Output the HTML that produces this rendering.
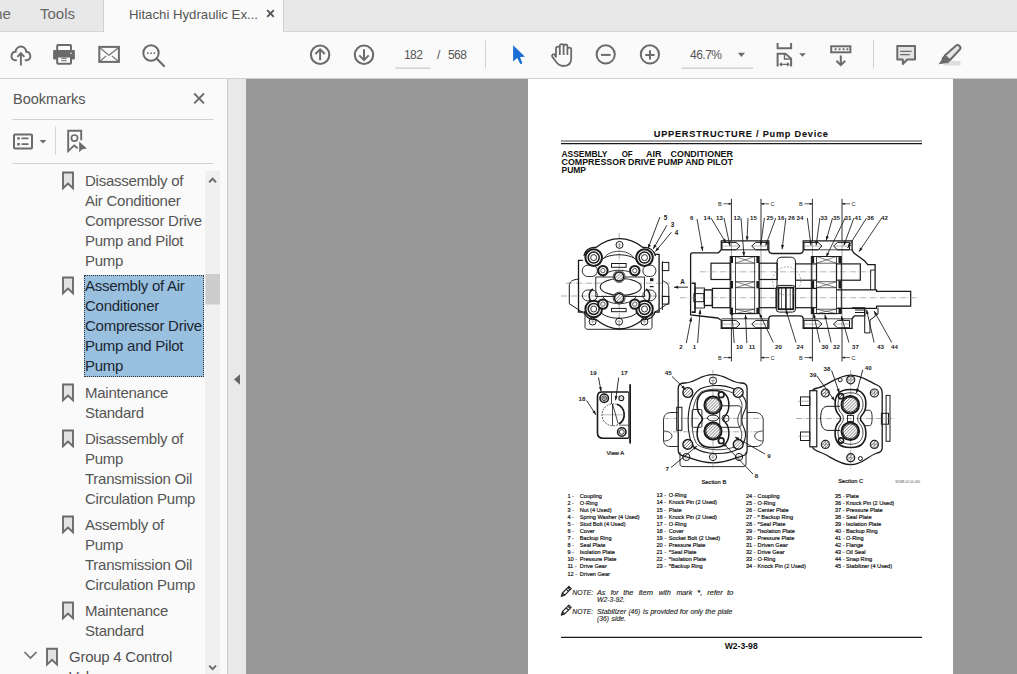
<!DOCTYPE html>
<html><head><meta charset="utf-8">
<style>
*{margin:0;padding:0;box-sizing:border-box}
html,body{width:1017px;height:674px;overflow:hidden;background:#999;font-family:"Liberation Sans",sans-serif}
.a{position:absolute}
#tabs{left:0;top:0;width:1017px;height:32px;background:#e8e8e8;border-bottom:1px solid #d4d4d4}
#tb{left:0;top:32px;width:1017px;height:47px;background:#fafafa;border-bottom:1px solid #cfcfcf}
#side{left:0;top:79px;width:228px;height:595px;background:#fafafa;border-right:1px solid #c8c8c8}
#gap{left:228px;top:79px;width:18px;height:595px;background:#e9e9e9}
#page{left:528px;top:79px;width:425px;height:595px;background:#fff}
.bm{position:absolute;left:85px;font-size:15px;line-height:20px;color:#505050;white-space:nowrap;letter-spacing:-0.25px}
.ic{position:absolute;left:62px;width:12px;height:19px}
</style></head><body>
<!-- tab bar -->
<div id="tabs" class="a"></div>
<div class="a" style="left:0;top:0;width:104px;height:32px;border-right:1px solid #d0d0d0"></div>
<div class="a" style="left:-10px;top:5px;font-size:15px;color:#666">me</div>
<div class="a" style="left:40px;top:5px;font-size:15px;color:#666">Tools</div>
<div class="a" style="left:104px;top:0;width:180px;height:33px;background:#fafafa;border-right:1px solid #d0d0d0"></div>
<div class="a" style="left:129px;top:7px;font-size:13.2px;color:#555;white-space:nowrap">Hitachi Hydraulic Ex...</div>
<svg class="a" style="left:266px;top:9px" width="10" height="10"><path d="M1.2 1.2L7.8 7.8M7.8 1.2L1.2 7.8" stroke="#555" stroke-width="1.9"/></svg>
<!-- toolbar -->
<div id="tb" class="a"></div>
<svg class="a" style="left:0;top:0" width="1017" height="79" fill="none" stroke="#6b6b6b" stroke-width="2">
<!-- cloud -->
<path d="M16.8,60.2 H14.5 A4.3,4.3 0 0 1 15.6,51.8 A5.3,5.3 0 0 1 26.2,51.8 A4.3,4.3 0 0 1 27.3,60.2 H24.8" stroke-width="1.9"/>
<path d="M20.9,53.5 V65.6 M17.4,56.9 L20.9,53.2 L24.4,56.9" stroke-width="1.9"/>
<!-- printer -->
<rect x="57.2" y="45" width="13.8" height="6" rx="0.8"/>
<rect x="53.1" y="50" width="21.8" height="9.6" rx="1" fill="#6b6b6b" stroke="none"/>
<rect x="57.2" y="56.6" width="13.8" height="7.1" rx="0.8" fill="#fafafa"/>
<path d="M61.3,58.4 H66.7 M61.3,60.6 H66.7" stroke-width="1"/>
<rect x="70.3" y="52.8" width="1.6" height="1.2" fill="#ddd" stroke="none"/>
<!-- mail -->
<rect x="99.3" y="46.9" width="19.6" height="15" stroke-width="2"/>
<path d="M100.3,48 L109,55.3 L118,48 M100.3,61 L106.3,55.8 M118,61 L111.8,55.8" stroke-width="1.1"/>
<!-- search -->
<circle cx="151" cy="53" r="7.7" stroke-width="2"/>
<path d="M156.8,58.8 L164,66" stroke-width="2.2" stroke-linecap="round"/>
<circle cx="147.9" cy="53.2" r="0.9" fill="#6b6b6b" stroke="none"/>
<circle cx="151.1" cy="53.2" r="0.9" fill="#6b6b6b" stroke="none"/>
<circle cx="154.4" cy="53.2" r="0.9" fill="#6b6b6b" stroke="none"/>
<!-- up/down -->
<circle cx="320.1" cy="54.75" r="9.2" stroke-width="2.1"/>
<path d="M320.1,49.6 V60.3 M315.4,54 L320.1,49.3 L324.8,54" stroke-width="2"/>
<circle cx="364" cy="54.75" r="9.2" stroke-width="2.1"/>
<path d="M364,49.2 V59.8 M359.3,55.4 L364,60.1 L368.7,55.4" stroke-width="2"/>
<!-- page input underline -->
<path d="M395.5,68.2 H430" stroke="#c8c8c8" stroke-width="1.2"/>
<path d="M485.5,40.5 V68.5" stroke="#d2d2d2" stroke-width="1"/>
<!-- cursor -->
<path d="M513.1,45.2 L513.1,61.4 L517.2,58.1 L520.5,64.3 L522.4,63.3 L520,57.1 L525,56.7 Z" fill="#1b6fd4" stroke="none"/>
<!-- hand -->
<path d="M556,57.5 V48.6 A1.9,1.9 0 0 1 559.8,48.6 V55 M559.8,55 V46 A1.9,1.9 0 0 1 563.6,46 V55 M563.6,55 V46.4 A1.9,1.9 0 0 1 567.4,46.4 V55 M567.4,55 V49.6 A1.9,1.9 0 0 1 571.2,49.6 V58.5 C571.2,63.5 568,66 563.5,66 C559.5,66 557.5,64 555.5,61 L552.2,56.6 A1.6,1.6 0 0 1 554.9,54.9 L556,57.5" stroke-width="1.8" stroke-linejoin="round"/>
<!-- zoom out/in -->
<circle cx="605.7" cy="54.4" r="9.1" stroke-width="2"/>
<path d="M601,54.9 H610.6" stroke-width="2"/>
<circle cx="649.9" cy="54.4" r="9.1" stroke-width="2"/>
<path d="M645.3,54.9 H654.6 M649.95,50.3 V59.5" stroke-width="2"/>
<!-- zoom underline + tri -->
<path d="M682,68.2 H753" stroke="#c8c8c8" stroke-width="1.2"/>
<path d="M737.9,52.7 L745,52.7 L741.45,57 Z" fill="#6b6b6b" stroke="none"/>
<!-- fit page -->
<path d="M777.6,43.1 V48.3 H791.1 V43.1" stroke-width="2"/>
<path d="M777.6,66.5 V53.8 H785.5 L791.1,58.6 V66.5" stroke-width="2" stroke-linejoin="miter"/>
<path d="M784.5,53.8 V59 H791" stroke-width="1.4"/>
<path d="M780,64.3 H789 M781.8,62.6 L780,64.3 L781.8,66 M787.2,62.6 L789,64.3 L787.2,66" stroke-width="1.2"/>
<path d="M799.2,53.3 L805.8,53.3 L802.5,56.8 Z" fill="#6b6b6b" stroke="none"/>
<!-- scroll -->
<rect x="831.2" y="46.3" width="19.2" height="6" stroke-width="2"/>
<path d="M834.6,49.3 h2 M838.6,49.3 h2 M842.6,49.3 h2 M846.4,49.3 h2" stroke-width="2"/>
<path d="M840.8,55.5 V65.2 M836.4,60.8 L840.8,65.2 L845.2,60.8" stroke-width="2"/>
<path d="M873.5,40.5 V68.5" stroke="#d2d2d2" stroke-width="1"/>
<!-- comment -->
<path d="M897.3,46.1 H915 V59.5 H907.3 L902.8,64 V59.5 H897.3 Z" fill="#e4e4e4" stroke-width="2" stroke-linejoin="round"/>
<path d="M900.2,51.4 H911.6 M900.2,54.6 H909.7" stroke-width="1.1"/>
<!-- pen -->
<rect x="943.5" y="61" width="17" height="4.6" fill="#dedede" stroke="none"/>
<path d="M944.8,55.6 L955.6,46 A2.7,2.7 0 0 1 959.6,49.8 L949.8,60.2 Z" fill="#e6e6e6" stroke-width="2" stroke-linejoin="round"/>
<path d="M944.8,55.6 L949.8,60.2 L947.4,62.8 L942.2,58.2 Z" fill="#6b6b6b" stroke="#6b6b6b" stroke-width="1.2" stroke-linejoin="round"/>
<path d="M942.4,58.4 L938.6,64.3 L947.2,62.9 Z" fill="#6b6b6b" stroke="none"/>
</svg>
<div class="a" style="left:404px;top:48px;font-size:12px;color:#555;letter-spacing:-0.6px">182</div>
<div class="a" style="left:437px;top:48px;font-size:12px;color:#555">/</div>
<div class="a" style="left:448px;top:48px;font-size:12px;color:#555;letter-spacing:-0.6px">568</div>
<div class="a" style="left:690px;top:48px;font-size:12px;color:#555;letter-spacing:-0.5px">46.7%</div>

<!-- sidebar -->
<div id="side" class="a"></div>
<div class="a" style="left:13px;top:91px;font-size:14.5px;color:#555">Bookmarks</div>
<svg class="a" style="left:0;top:79px" width="228" height="595" fill="none" stroke="#6b6b6b" stroke-width="2">
<path d="M194.2,14.5 L204,24.3 M204,14.5 L194.2,24.3" stroke-width="1.9"/>
<path d="M12.5,40.5 H213.5 M12.5,84.5 H213.5" stroke="#d0d0d0" stroke-width="1"/>
<!-- list icon -->
<rect x="14" y="55.4" width="18" height="14" rx="1" stroke-width="2"/>
<path d="M17.2,59.4 h2.6 M17.2,65.2 h2.6" stroke-width="2.4"/>
<path d="M21.5,59.4 h7 M21.5,65.2 h7" stroke-width="1.8"/>
<path d="M39.6,61 L46.4,61 L43,64.6 Z" fill="#6b6b6b" stroke="none"/>
<path d="M55.5,47.5 V76" stroke="#d4d4d4" stroke-width="1"/>
<!-- bookmark search icon -->
<path d="M77.6,69.2 L74.2,66.4 L68.2,72.1 V51.7 H81.2 V61.2" stroke-width="1.9" stroke-linejoin="miter"/>
<circle cx="74.5" cy="59.1" r="3.1" stroke-width="1.7"/>
<path d="M79.2,62.4 V73.6 L81.8,70.6 L86.8,69.6 Z" fill="#6b6b6b" stroke="none"/>
<!-- scrollbar -->
<rect x="205" y="92" width="15" height="503" fill="#f0f0f0" stroke="none"/>
<rect x="205.5" y="195" width="14.5" height="30.5" fill="#cdcdcd" stroke="none"/>
<path d="M209.2,103.2 L212.6,99.6 L216,103.2" stroke-width="2"/>
<path d="M209.2,586.6 L212.6,590.2 L216,586.6" stroke-width="1.9"/>
</svg>
<!-- selection -->
<div class="a" style="left:84px;top:275px;width:120px;height:102px;background:#99c0de;border:1px dotted #333"></div>
<div class="bm" style="top:171px;color:#555">Disassembly of<br>Air Conditioner<br>Compressor Drive<br>Pump and Pilot<br>Pump</div>
<svg class="a" style="left:61px;top:171px" width="14" height="21"><path d="M2,1.5 H12 V17.3 L7,12.6 L2,17.3 Z" fill="#e2e2e2" stroke="#6b6b6b" stroke-width="1.9" stroke-linejoin="miter"/></svg>
<div class="bm" style="top:276px;color:#1b2633">Assembly of Air<br>Conditioner<br>Compressor Drive<br>Pump and Pilot<br>Pump</div>
<svg class="a" style="left:61px;top:276px" width="14" height="21"><path d="M2,1.5 H12 V17.3 L7,12.6 L2,17.3 Z" fill="#e2e2e2" stroke="#6b6b6b" stroke-width="1.9" stroke-linejoin="miter"/></svg>
<div class="bm" style="top:383px;color:#555">Maintenance<br>Standard</div>
<svg class="a" style="left:61px;top:383px" width="14" height="21"><path d="M2,1.5 H12 V17.3 L7,12.6 L2,17.3 Z" fill="#e2e2e2" stroke="#6b6b6b" stroke-width="1.9" stroke-linejoin="miter"/></svg>
<div class="bm" style="top:429px;color:#555">Disassembly of<br>Pump<br>Transmission Oil<br>Circulation Pump</div>
<svg class="a" style="left:61px;top:429px" width="14" height="21"><path d="M2,1.5 H12 V17.3 L7,12.6 L2,17.3 Z" fill="#e2e2e2" stroke="#6b6b6b" stroke-width="1.9" stroke-linejoin="miter"/></svg>
<div class="bm" style="top:515px;color:#555">Assembly of<br>Pump<br>Transmission Oil<br>Circulation Pump</div>
<svg class="a" style="left:61px;top:515px" width="14" height="21"><path d="M2,1.5 H12 V17.3 L7,12.6 L2,17.3 Z" fill="#e2e2e2" stroke="#6b6b6b" stroke-width="1.9" stroke-linejoin="miter"/></svg>
<div class="bm" style="top:601px;color:#555">Maintenance<br>Standard</div>
<svg class="a" style="left:61px;top:601px" width="14" height="21"><path d="M2,1.5 H12 V17.3 L7,12.6 L2,17.3 Z" fill="#e2e2e2" stroke="#6b6b6b" stroke-width="1.9" stroke-linejoin="miter"/></svg>
<div class="bm" style="left:69px;top:647px">Group 4 Control<br>Valve</div>
<svg class="a" style="left:20px;top:645px" width="45" height="25" fill="none" stroke="#6b6b6b" stroke-width="1.6"><path d="M4.5,7 L10.5,13 L16.5,7"/><path d="M27,3.8 H37 V19.6 L32,14.9 L27,19.6 Z" fill="#e2e2e2" stroke-width="1.9"/></svg>
<div id="gap" class="a"></div>
<svg class="a" style="left:233px;top:373px" width="9" height="13"><path d="M1,6.5 L7,1.3 V11.7 Z" fill="#666"/></svg>
<!-- page -->
<div id="page" class="a"></div>
<!--PAGESVG-->
<svg class="a" style="left:528px;top:79px" width="426" height="595" viewBox="528 79 426 595" font-family="Liberation Sans, sans-serif">
<defs><pattern id="hat" patternUnits="userSpaceOnUse" width="2.2" height="2.2" patternTransform="rotate(45)"><rect width="2.2" height="2.2" fill="#fff"/><path d="M0,0 V2.2" stroke="#333" stroke-width="0.9"/></pattern></defs>
<text x="653.8" y="136.7" font-size="9.2" text-anchor="start" font-weight="bold" font-style="normal" fill="#111" letter-spacing="0.76" stroke="#111" stroke-width="0.1">UPPERSTRUCTURE / Pump Device</text>
<path d="M561.0,141.0 L922.0,141.0" stroke="#333" stroke-width="0.9" />
<path d="M561.0,143.6 L922.0,143.6" stroke="#1a1a1a" stroke-width="1.3" />
<g font-weight="bold" font-size="8.7" fill="#111">
<text x="561.5" y="156.8" font-size="8.7" text-anchor="start" font-weight="bold" font-style="normal" fill="#111" textLength="46" lengthAdjust="spacingAndGlyphs">ASSEMBLY</text>
<text x="621.7" y="156.8" font-size="8.7" text-anchor="start" font-weight="bold" font-style="normal" fill="#111" textLength="11" lengthAdjust="spacingAndGlyphs">OF</text>
<text x="646.0" y="156.8" font-size="8.7" text-anchor="start" font-weight="bold" font-style="normal" fill="#111" textLength="15.5" lengthAdjust="spacingAndGlyphs">AIR</text>
<text x="670.5" y="156.8" font-size="8.7" text-anchor="start" font-weight="bold" font-style="normal" fill="#111" textLength="62.5" lengthAdjust="spacingAndGlyphs">CONDITIONER</text>
<text x="561.5" y="164.7" font-size="8.7" text-anchor="start" font-weight="bold" font-style="normal" fill="#111" textLength="171.5" lengthAdjust="spacingAndGlyphs">COMPRESSOR DRIVE PUMP AND PILOT</text>
<text x="561.5" y="173.4" font-size="8.7" text-anchor="start" font-weight="bold" font-style="normal" fill="#111" textLength="24.5" lengthAdjust="spacingAndGlyphs">PUMP</text>
</g>
<path d="M619.2,233.0 L619.2,331.0" stroke="#777" stroke-width="0.6" stroke-dasharray="6,1.5,1,1.5"/>
<path d="M566.0,283.2 L670.0,283.2" stroke="#777" stroke-width="0.6" stroke-dasharray="6,1.5,1,1.5"/>
<path d="M561.0,296.0 L670.0,296.0" stroke="#777" stroke-width="0.6" stroke-dasharray="6,1.5,1,1.5"/>
<path d="M584,256 C585,250 590,247 596,247.5 C603,242 611,238.7 619.5,238.7 C628,238.7 636,242 643,247.5 C649,247 654,250 655.5,256" stroke="#1a1a1a" stroke-width="1.3" fill="none" />
<path d="M584,311 C585,317 590,320 596,319.5 C603,325 611,329 619.5,329 C628,329 636,325 643,319.5 C649,320 654,317 655.5,311" stroke="#1a1a1a" stroke-width="1.3" fill="none" />
<path d="M585,314 V327 C585,328.5 586,329.3 588,329.3 H649.5 C651.3,329.3 652,328.5 652,327 V314" stroke="#1a1a1a" stroke-width="0.9" fill="none" />
<path d="M582.8,260.3 H578.5 V312 H583" stroke="#1a1a1a" stroke-width="1.3" fill="none" />
<path d="M655,254.3 H659.1 V312 H655" stroke="#1a1a1a" stroke-width="1.3" fill="none" />
<path d="M662.4,261.4 L662.4,310.0" stroke="#1a1a1a" stroke-width="1.0" />
<rect x="662.4" y="262.4" width="6.4" height="8.2" rx="0" stroke="#1a1a1a" stroke-width="1.0" fill="none" />
<rect x="662.4" y="296.5" width="6.4" height="7.6" rx="0" stroke="#1a1a1a" stroke-width="1.0" fill="none" />
<path d="M578.5,279.2 C572,279.5 569.3,282 569.3,286 V303.7 L585,314" stroke="#1a1a1a" stroke-width="1.0" fill="none" />
<path d="M662.4,281 C666,281.5 668.8,284 668.8,288 V303 L652,314" stroke="#1a1a1a" stroke-width="0.9" fill="none" />
<path d="M599,263 C604,252 634,252 639,263" stroke="#1a1a1a" stroke-width="1.0" fill="none" />
<path d="M604,258 C610,249 628,249 634,258" stroke="#1a1a1a" stroke-width="0.8" fill="none" />
<rect x="611.5" y="263.5" width="14.6" height="3.8" rx="0" stroke="#1a1a1a" stroke-width="1.0" fill="none" />
<path d="M599,310 C604,321 634,321 639,310" stroke="#1a1a1a" stroke-width="1.0" fill="none" />
<rect x="611.5" y="308.4" width="14.6" height="3.3" rx="0" stroke="#1a1a1a" stroke-width="1.0" fill="none" />
<rect x="595.8" y="277.0" width="48.7" height="19.5" rx="0" stroke="#1a1a1a" stroke-width="0.9" fill="none" />
<ellipse cx="620.7" cy="287" rx="20.5" ry="8.5" stroke="#1a1a1a" stroke-width="1.1" fill="#fff"/>
<path d="M603,277 C606,268 632,268 636,277" stroke="#1a1a1a" stroke-width="0.9" fill="none" />
<path d="M603,296.5 C606,306 632,306 636,296.5" stroke="#1a1a1a" stroke-width="0.9" fill="none" />
<rect x="582.3" y="265.1" width="15.1" height="11.4" rx="5.5" stroke="#1a1a1a" stroke-width="0.9" fill="none" />
<rect x="582.3" y="290.0" width="15.1" height="10.8" rx="5.4" stroke="#1a1a1a" stroke-width="0.9" fill="none" />
<rect x="642.9" y="265.1" width="13.0" height="11.4" rx="5.5" stroke="#1a1a1a" stroke-width="0.9" fill="none" />
<rect x="642.9" y="290.0" width="13.0" height="10.8" rx="5.4" stroke="#1a1a1a" stroke-width="0.9" fill="none" />
<path d="M593,289 C588,292 588,300 593,303" stroke="#1a1a1a" stroke-width="1.6" fill="none" />
<path d="M646,289 C651,292 651,300 646,303" stroke="#1a1a1a" stroke-width="1.6" fill="none" />
<rect x="650.0" y="278.2" width="3.4" height="3.0" rx="0" stroke="#1a1a1a" stroke-width="0" fill="#1a1a1a" />
<rect x="649.8" y="286.0" width="3.8" height="1.2" rx="0" stroke="#1a1a1a" stroke-width="0" fill="#1a1a1a" />
<circle cx="619.5" cy="244.9" r="3.5" stroke="#1a1a1a" stroke-width="1.0" fill="none" />
<path d="M617.5,244.9 L621.5,244.9" stroke="#777" stroke-width="0.5" />
<path d="M619.5,242.9 L619.5,246.9" stroke="#777" stroke-width="0.5" />
<circle cx="619.1" cy="321.6" r="3.5" stroke="#1a1a1a" stroke-width="1.0" fill="none" />
<path d="M617.1,321.6 L621.1,321.6" stroke="#777" stroke-width="0.5" />
<path d="M619.1,319.6 L619.1,323.6" stroke="#777" stroke-width="0.5" />
<circle cx="592.6" cy="321.6" r="3.5" stroke="#1a1a1a" stroke-width="1.0" fill="none" />
<path d="M590.6,321.6 L594.6,321.6" stroke="#777" stroke-width="0.5" />
<path d="M592.6,319.6 L592.6,323.6" stroke="#777" stroke-width="0.5" />
<circle cx="644.4" cy="321.6" r="3.5" stroke="#1a1a1a" stroke-width="1.0" fill="none" />
<path d="M642.4,321.6 L646.4,321.6" stroke="#777" stroke-width="0.5" />
<path d="M644.4,319.6 L644.4,323.6" stroke="#777" stroke-width="0.5" />
<circle cx="593.7" cy="257.6" r="8.3" stroke="#1a1a1a" stroke-width="2.0" fill="#fff" />
<circle cx="593.7" cy="257.6" r="5.5" stroke="#1a1a1a" stroke-width="1.5" fill="none" />
<circle cx="593.7" cy="257.6" r="3.0" stroke="#1a1a1a" stroke-width="0.9" fill="none" />
<circle cx="644.5" cy="257.6" r="8.3" stroke="#1a1a1a" stroke-width="2.0" fill="#fff" />
<circle cx="644.5" cy="257.6" r="5.5" stroke="#1a1a1a" stroke-width="1.5" fill="none" />
<circle cx="644.5" cy="257.6" r="3.0" stroke="#1a1a1a" stroke-width="0.9" fill="none" />
<circle cx="593.7" cy="309.0" r="8.3" stroke="#1a1a1a" stroke-width="2.0" fill="#fff" />
<circle cx="593.7" cy="309.0" r="5.5" stroke="#1a1a1a" stroke-width="1.5" fill="none" />
<circle cx="593.7" cy="309.0" r="3.0" stroke="#1a1a1a" stroke-width="0.9" fill="none" />
<circle cx="644.5" cy="309.0" r="8.3" stroke="#1a1a1a" stroke-width="2.0" fill="#fff" />
<circle cx="644.5" cy="309.0" r="5.5" stroke="#1a1a1a" stroke-width="1.5" fill="none" />
<circle cx="644.5" cy="309.0" r="3.0" stroke="#1a1a1a" stroke-width="0.9" fill="none" />
<circle cx="602.9" cy="270.6" r="4.7" stroke="#1a1a1a" stroke-width="2.0" fill="#fff" />
<circle cx="602.9" cy="270.6" r="2.2" stroke="#1a1a1a" stroke-width="0.7" fill="none" />
<circle cx="634.8" cy="270.6" r="4.7" stroke="#1a1a1a" stroke-width="2.0" fill="#fff" />
<circle cx="634.8" cy="270.6" r="2.2" stroke="#1a1a1a" stroke-width="0.7" fill="none" />
<circle cx="602.9" cy="304.1" r="4.7" stroke="#1a1a1a" stroke-width="2.0" fill="#fff" />
<circle cx="602.9" cy="304.1" r="2.2" stroke="#1a1a1a" stroke-width="0.7" fill="none" />
<circle cx="634.8" cy="304.1" r="4.7" stroke="#1a1a1a" stroke-width="2.0" fill="#fff" />
<circle cx="634.8" cy="304.1" r="2.2" stroke="#1a1a1a" stroke-width="0.7" fill="none" />
<circle cx="619.1" cy="276.5" r="5.9" stroke="#1a1a1a" stroke-width="0.8" fill="#fff" />
<circle cx="619.1" cy="276.5" r="4.6" stroke="#1a1a1a" stroke-width="1.5" fill="url(#hat)" />
<circle cx="619.1" cy="298.1" r="5.9" stroke="#1a1a1a" stroke-width="0.8" fill="#fff" />
<circle cx="619.1" cy="298.1" r="4.6" stroke="#1a1a1a" stroke-width="1.5" fill="url(#hat)" />
<path d="M688.0,287.2 L674.0,287.2" stroke="#1a1a1a" stroke-width="0.9" />
<path d="M674.0,287.2 L678.2,285.7 L678.2,288.7 Z" fill="#1a1a1a"/>
<text x="682.5" y="283.5" font-size="6.3" text-anchor="middle" font-weight="bold" font-style="normal" fill="#1a1a1a" >A</text>
<text x="665.4" y="219.8" font-size="6.3" text-anchor="middle" font-weight="bold" font-style="normal" fill="#1a1a1a" >5</text>
<text x="672.5" y="226.9" font-size="6.3" text-anchor="middle" font-weight="bold" font-style="normal" fill="#1a1a1a" >3</text>
<text x="676.5" y="235.0" font-size="6.3" text-anchor="middle" font-weight="bold" font-style="normal" fill="#1a1a1a" >4</text>
<path d="M659.9,217.0 L648.0,248.6" stroke="#1a1a1a" stroke-width="0.9" />
<path d="M648.0,248.6 L648.1,244.1 L650.9,245.2 Z" fill="#1a1a1a"/>
<path d="M666.9,225.2 L653.2,249.0" stroke="#1a1a1a" stroke-width="0.9" />
<path d="M653.2,249.0 L654.0,244.6 L656.6,246.1 Z" fill="#1a1a1a"/>
<path d="M671.4,232.3 L655.4,251.5" stroke="#1a1a1a" stroke-width="0.9" />
<path d="M655.4,251.5 L656.9,247.3 L659.2,249.2 Z" fill="#1a1a1a"/>
<path d="M731.4,198.8 L731.4,240.5" stroke="#1a1a1a" stroke-width="0.9" />
<path d="M731.4,328.5 L731.4,361.4" stroke="#1a1a1a" stroke-width="0.9" />
<path d="M731.4,240.0 L731.4,329.0" stroke="#444" stroke-width="0.5" />
<path d="M761.0,198.8 L761.0,240.5" stroke="#1a1a1a" stroke-width="0.9" />
<path d="M761.0,328.5 L761.0,361.4" stroke="#1a1a1a" stroke-width="0.9" />
<path d="M761.0,240.0 L761.0,329.0" stroke="#444" stroke-width="0.5" />
<path d="M812.4,198.8 L812.4,240.5" stroke="#1a1a1a" stroke-width="0.9" />
<path d="M812.4,328.5 L812.4,361.4" stroke="#1a1a1a" stroke-width="0.9" />
<path d="M812.4,240.0 L812.4,329.0" stroke="#444" stroke-width="0.5" />
<path d="M842.0,198.8 L842.0,240.5" stroke="#1a1a1a" stroke-width="0.9" />
<path d="M842.0,328.5 L842.0,361.4" stroke="#1a1a1a" stroke-width="0.9" />
<path d="M842.0,240.0 L842.0,329.0" stroke="#444" stroke-width="0.5" />
<text x="719.9" y="205.8" font-size="5.6" text-anchor="middle" font-weight="normal" font-style="normal" fill="#1a1a1a" >B</text>
<path d="M723.4,203.8 L731.4,203.8" stroke="#1a1a1a" stroke-width="0.7" />
<path d="M731.4,203.8 l-2.8,-1.1 v2.2 z" fill="#1a1a1a"/>
<text x="772.5" y="205.8" font-size="5.6" text-anchor="middle" font-weight="normal" font-style="normal" fill="#1a1a1a" >C</text>
<path d="M761.0,203.8 L769.0,203.8" stroke="#1a1a1a" stroke-width="0.7" />
<path d="M761,203.8 l2.8,-1.1 v2.2 z" fill="#1a1a1a"/>
<text x="800.9" y="205.8" font-size="5.6" text-anchor="middle" font-weight="normal" font-style="normal" fill="#1a1a1a" >B</text>
<path d="M804.4,203.8 L812.4,203.8" stroke="#1a1a1a" stroke-width="0.7" />
<path d="M812.4,203.8 l-2.8,-1.1 v2.2 z" fill="#1a1a1a"/>
<text x="853.5" y="205.8" font-size="5.6" text-anchor="middle" font-weight="normal" font-style="normal" fill="#1a1a1a" >C</text>
<path d="M842.0,203.8 L850.0,203.8" stroke="#1a1a1a" stroke-width="0.7" />
<path d="M842,203.8 l2.8,-1.1 v2.2 z" fill="#1a1a1a"/>
<text x="719.9" y="359.6" font-size="5.6" text-anchor="middle" font-weight="normal" font-style="normal" fill="#1a1a1a" >B</text>
<path d="M723.4,357.6 L731.4,357.6" stroke="#1a1a1a" stroke-width="0.7" />
<path d="M731.4,357.6 l-2.8,-1.1 v2.2 z" fill="#1a1a1a"/>
<text x="772.5" y="359.6" font-size="5.6" text-anchor="middle" font-weight="normal" font-style="normal" fill="#1a1a1a" >C</text>
<path d="M761.0,357.6 L769.0,357.6" stroke="#1a1a1a" stroke-width="0.7" />
<path d="M761,357.6 l2.8,-1.1 v2.2 z" fill="#1a1a1a"/>
<text x="800.9" y="359.6" font-size="5.6" text-anchor="middle" font-weight="normal" font-style="normal" fill="#1a1a1a" >B</text>
<path d="M804.4,357.6 L812.4,357.6" stroke="#1a1a1a" stroke-width="0.7" />
<path d="M812.4,357.6 l-2.8,-1.1 v2.2 z" fill="#1a1a1a"/>
<text x="853.5" y="359.6" font-size="5.6" text-anchor="middle" font-weight="normal" font-style="normal" fill="#1a1a1a" >C</text>
<path d="M842.0,357.6 L850.0,357.6" stroke="#1a1a1a" stroke-width="0.7" />
<path d="M842,357.6 l2.8,-1.1 v2.2 z" fill="#1a1a1a"/>
<path d="M721.3,249.8 L718.4,252.8 H692.6 C691.3,252.8 690.6,253.6 690.6,255 V315 L717.6,318 L721.3,320.3" stroke="#1a1a1a" stroke-width="1.3" fill="none" />
<path d="M721.3,249.8 V240.9 H768.8 V249.8 C768.8,252 770,253.5 772,253.5 H800 C802,253.5 803.2,252 803.2,249.8 V240.9 H852.1 V249.8 L853.6,252.8 L864.7,261 L867.7,264.7 H875.1 V290" stroke="#1a1a1a" stroke-width="1.3" fill="none" />
<path d="M721.3,320.3 V328.4 H768.8 V318.8 C768.8,317 770,315.8 772,315.8 H800 C802,315.8 803.2,317 803.2,318.8 V328.4 H852.1 V318.8 L854.3,315.8 H864.7 V307.7" stroke="#1a1a1a" stroke-width="1.3" fill="none" />
<path d="M721.3,249.8 L768.8,249.8" stroke="#1a1a1a" stroke-width="0.8" />
<path d="M803.2,249.8 L852.1,249.8" stroke="#1a1a1a" stroke-width="0.8" />
<path d="M721.3,318.8 L768.8,318.8" stroke="#1a1a1a" stroke-width="0.8" />
<path d="M803.2,318.8 L852.1,318.8" stroke="#1a1a1a" stroke-width="0.8" />
<path d="M691.7,283.2 H695 V312.1 H691.7" stroke="#1a1a1a" stroke-width="1.6" fill="none" />
<rect x="695.0" y="288.0" width="9.5" height="20.0" rx="0" stroke="#1a1a1a" stroke-width="0.9" fill="none" />
<rect x="693.9" y="293.6" width="10.0" height="8.1" rx="0" stroke="#1a1a1a" stroke-width="1.0" fill="none" />
<rect x="704.3" y="289.9" width="8.1" height="15.6" rx="0" stroke="#1a1a1a" stroke-width="1.4" fill="none" />
<rect x="711.0" y="263.2" width="19.2" height="16.3" rx="0" stroke="#1a1a1a" stroke-width="1.2" fill="none" />
<rect x="759.2" y="263.2" width="18.0" height="16.3" rx="0" stroke="#1a1a1a" stroke-width="1.2" fill="none" />
<rect x="795.5" y="263.9" width="21.0" height="16.3" rx="0" stroke="#1a1a1a" stroke-width="1.2" fill="none" />
<rect x="836.5" y="263.9" width="23.8" height="16.3" rx="0" stroke="#1a1a1a" stroke-width="1.2" fill="none" />
<rect x="712.4" y="288.4" width="17.8" height="19.3" rx="0" stroke="#1a1a1a" stroke-width="1.2" fill="none" />
<rect x="759.2" y="288.4" width="17.0" height="19.3" rx="0" stroke="#1a1a1a" stroke-width="1.2" fill="none" />
<rect x="795.5" y="288.4" width="21.0" height="19.3" rx="0" stroke="#1a1a1a" stroke-width="1.2" fill="none" />
<path d="M836.5,289.9 H876.6 V291.4 H910.7 V306.2 H876.6 V308.4 H836.5" stroke="#1a1a1a" stroke-width="1.2" fill="none" />
<path d="M700.0,271.8 L872.0,271.8" stroke="#777" stroke-width="0.55" stroke-dasharray="6,1.5,1,1.5"/>
<path d="M680.0,297.7 L918.0,297.7" stroke="#777" stroke-width="0.55" stroke-dasharray="6,1.5,1,1.5"/>
<rect x="730.2" y="256.5" width="29.0" height="57.1" rx="0" stroke="#1a1a1a" stroke-width="1.0" fill="none" />
<rect x="735.4" y="256.5" width="19.3" height="57.1" rx="0" stroke="#1a1a1a" stroke-width="0.8" fill="none" />
<path d="M735.4,256.5 L754.7,263.2 M754.7,256.5 L735.4,263.2" stroke="#333" stroke-width="0.6" fill="none" />
<path d="M735.4,256.5 L754.7,256.5" stroke="#1a1a1a" stroke-width="0.7" />
<path d="M735.4,263.2 L754.7,263.2" stroke="#1a1a1a" stroke-width="0.7" />
<path d="M735.4,281.7 L754.7,287.7 M754.7,281.7 L735.4,287.7" stroke="#333" stroke-width="0.6" fill="none" />
<path d="M735.4,281.7 L754.7,281.7" stroke="#1a1a1a" stroke-width="0.7" />
<path d="M735.4,287.7 L754.7,287.7" stroke="#1a1a1a" stroke-width="0.7" />
<path d="M735.4,309.2 L754.7,313.6 M754.7,309.2 L735.4,313.6" stroke="#333" stroke-width="0.6" fill="none" />
<path d="M735.4,309.2 L754.7,309.2" stroke="#1a1a1a" stroke-width="0.7" />
<path d="M735.4,313.6 L754.7,313.6" stroke="#1a1a1a" stroke-width="0.7" />
<rect x="730.4" y="256.5" width="2.6" height="6.5" rx="0" stroke="#1a1a1a" stroke-width="0" fill="#1a1a1a" />
<rect x="730.4" y="281.0" width="2.6" height="7.4" rx="0" stroke="#1a1a1a" stroke-width="0" fill="#1a1a1a" />
<rect x="730.4" y="307.7" width="2.6" height="5.9" rx="0" stroke="#1a1a1a" stroke-width="0" fill="#1a1a1a" />
<rect x="756.4" y="256.5" width="2.6" height="6.5" rx="0" stroke="#1a1a1a" stroke-width="0" fill="#1a1a1a" />
<rect x="756.4" y="281.0" width="2.6" height="7.4" rx="0" stroke="#1a1a1a" stroke-width="0" fill="#1a1a1a" />
<rect x="756.4" y="307.7" width="2.6" height="5.9" rx="0" stroke="#1a1a1a" stroke-width="0" fill="#1a1a1a" />
<rect x="811.3" y="256.5" width="30.0" height="57.1" rx="0" stroke="#1a1a1a" stroke-width="1.0" fill="none" />
<rect x="816.5" y="256.5" width="20.0" height="57.1" rx="0" stroke="#1a1a1a" stroke-width="0.8" fill="none" />
<path d="M816.5,256.5 L836.5,263.2 M836.5,256.5 L816.5,263.2" stroke="#333" stroke-width="0.6" fill="none" />
<path d="M816.5,256.5 L836.5,256.5" stroke="#1a1a1a" stroke-width="0.7" />
<path d="M816.5,263.2 L836.5,263.2" stroke="#1a1a1a" stroke-width="0.7" />
<path d="M816.5,281.7 L836.5,287.7 M836.5,281.7 L816.5,287.7" stroke="#333" stroke-width="0.6" fill="none" />
<path d="M816.5,281.7 L836.5,281.7" stroke="#1a1a1a" stroke-width="0.7" />
<path d="M816.5,287.7 L836.5,287.7" stroke="#1a1a1a" stroke-width="0.7" />
<path d="M816.5,309.2 L836.5,313.6 M836.5,309.2 L816.5,313.6" stroke="#333" stroke-width="0.6" fill="none" />
<path d="M816.5,309.2 L836.5,309.2" stroke="#1a1a1a" stroke-width="0.7" />
<path d="M816.5,313.6 L836.5,313.6" stroke="#1a1a1a" stroke-width="0.7" />
<rect x="811.5" y="256.5" width="2.6" height="6.5" rx="0" stroke="#1a1a1a" stroke-width="0" fill="#1a1a1a" />
<rect x="811.5" y="281.0" width="2.6" height="7.4" rx="0" stroke="#1a1a1a" stroke-width="0" fill="#1a1a1a" />
<rect x="811.5" y="307.7" width="2.6" height="5.9" rx="0" stroke="#1a1a1a" stroke-width="0" fill="#1a1a1a" />
<rect x="838.5" y="256.5" width="2.6" height="6.5" rx="0" stroke="#1a1a1a" stroke-width="0" fill="#1a1a1a" />
<rect x="838.5" y="281.0" width="2.6" height="7.4" rx="0" stroke="#1a1a1a" stroke-width="0" fill="#1a1a1a" />
<rect x="838.5" y="307.7" width="2.6" height="5.9" rx="0" stroke="#1a1a1a" stroke-width="0" fill="#1a1a1a" />
<path d="M777,290 V262 C777,258.5 779,257.2 782,257.2 H790.5 C793.5,257.2 795.5,258.5 795.5,262 V290" stroke="#1a1a1a" stroke-width="1.0" fill="none" />
<rect x="776.2" y="285.4" width="19.3" height="26.7" rx="3" stroke="#1a1a1a" stroke-width="1.0" fill="none" />
<rect x="778.4" y="287.7" width="14.9" height="21.5" rx="0" stroke="#1a1a1a" stroke-width="1.8" fill="#fff" />
<path d="M785.9,287.7 L785.9,309.2" stroke="#1a1a1a" stroke-width="1.6" />
<path d="M781.5,287.7 L781.5,309.2" stroke="#1a1a1a" stroke-width="0.7" />
<path d="M790.3,287.7 L790.3,309.2" stroke="#1a1a1a" stroke-width="0.7" />
<circle cx="786.6" cy="281.0" r="14.1" stroke="#777" stroke-width="0.6" fill="none" stroke-dasharray="2,1.5"/>
<path d="M722,242.4 H736 L740,246.1 L736,249.8 H722 Z" stroke="#1a1a1a" stroke-width="1.0" fill="none" />
<path d="M723.0,246.1 L739.0,246.1" stroke="#777" stroke-width="0.5" />
<path d="M722,320.4 H736 L740,324.09999999999997 L736,327.79999999999995 H722 Z" stroke="#1a1a1a" stroke-width="1.0" fill="none" />
<path d="M723.0,324.1 L739.0,324.1" stroke="#777" stroke-width="0.5" />
<path d="M767.7,242.4 H755.7 L751.7,246.1 L755.7,249.8 H767.7 Z" stroke="#1a1a1a" stroke-width="1.0" fill="none" />
<path d="M752.7,246.1 L768.7,246.1" stroke="#777" stroke-width="0.5" />
<path d="M767.7,320.4 H755.7 L751.7,324.09999999999997 L755.7,327.79999999999995 H767.7 Z" stroke="#1a1a1a" stroke-width="1.0" fill="none" />
<path d="M752.7,324.1 L768.7,324.1" stroke="#777" stroke-width="0.5" />
<path d="M804,242.4 H818 L822,246.1 L818,249.8 H804 Z" stroke="#1a1a1a" stroke-width="1.0" fill="none" />
<path d="M805.0,246.1 L821.0,246.1" stroke="#777" stroke-width="0.5" />
<path d="M804,320.4 H818 L822,324.09999999999997 L818,327.79999999999995 H804 Z" stroke="#1a1a1a" stroke-width="1.0" fill="none" />
<path d="M805.0,324.1 L821.0,324.1" stroke="#777" stroke-width="0.5" />
<path d="M849.5,242.4 H837.5 L833.5,246.1 L837.5,249.8 H849.5 Z" stroke="#1a1a1a" stroke-width="1.0" fill="none" />
<path d="M834.5,246.1 L850.5,246.1" stroke="#777" stroke-width="0.5" />
<path d="M849.5,320.4 H837.5 L833.5,324.09999999999997 L837.5,327.79999999999995 H849.5 Z" stroke="#1a1a1a" stroke-width="1.0" fill="none" />
<path d="M834.5,324.1 L850.5,324.1" stroke="#777" stroke-width="0.5" />
<path d="M870.6,270 V290 M870.6,270 H875.1" stroke="#1a1a1a" stroke-width="0.9" fill="none" />
<path d="M852,307.7 H864.7" stroke="#1a1a1a" stroke-width="1.0" fill="none" />
<path d="M864.7,307.7 V332.9 H870 V320 L878,314 V307.7" stroke="#1a1a1a" stroke-width="1.0" fill="none" />
<path d="M855,310 h10 M855,312.5 h10" stroke="#1a1a1a" stroke-width="1.1" fill="none" />
<text x="691.8" y="219.8" font-size="6.1" text-anchor="middle" font-weight="bold" font-style="normal" fill="#1a1a1a" >6</text>
<path d="M697.0,219.0 L702.7,250.9" stroke="#1a1a1a" stroke-width="0.85" />
<path d="M702.7,250.9 L700.5,247.0 L703.4,246.5 Z" fill="#1a1a1a"/>
<text x="707.0" y="219.8" font-size="6.1" text-anchor="middle" font-weight="bold" font-style="normal" fill="#1a1a1a" >14</text>
<path d="M711.0,218.0 L726.0,243.0" stroke="#1a1a1a" stroke-width="0.85" />
<path d="M726.0,243.0 L722.6,240.2 L725.1,238.6 Z" fill="#1a1a1a"/>
<text x="719.5" y="219.8" font-size="6.1" text-anchor="middle" font-weight="bold" font-style="normal" fill="#1a1a1a" >13</text>
<path d="M724.0,218.0 L730.0,246.0" stroke="#1a1a1a" stroke-width="0.85" />
<path d="M730.0,246.0 L727.7,242.2 L730.6,241.6 Z" fill="#1a1a1a"/>
<text x="737.0" y="219.8" font-size="6.1" text-anchor="middle" font-weight="bold" font-style="normal" fill="#1a1a1a" >12</text>
<path d="M741.0,218.0 L744.0,256.0" stroke="#1a1a1a" stroke-width="0.85" />
<path d="M744.0,256.0 L742.2,251.9 L745.2,251.7 Z" fill="#1a1a1a"/>
<text x="753.5" y="219.8" font-size="6.1" text-anchor="middle" font-weight="bold" font-style="normal" fill="#1a1a1a" >15</text>
<path d="M748.0,218.0 L747.0,240.5" stroke="#1a1a1a" stroke-width="0.85" />
<path d="M747.0,240.5 L745.7,236.2 L748.7,236.4 Z" fill="#1a1a1a"/>
<text x="770.0" y="219.8" font-size="6.1" text-anchor="middle" font-weight="bold" font-style="normal" fill="#1a1a1a" >25</text>
<path d="M764.4,218.0 L760.7,245.4" stroke="#1a1a1a" stroke-width="0.85" />
<path d="M760.7,245.4 L759.8,241.0 L762.7,241.4 Z" fill="#1a1a1a"/>
<text x="781.0" y="219.8" font-size="6.1" text-anchor="middle" font-weight="bold" font-style="normal" fill="#1a1a1a" >16</text>
<path d="M775.8,218.0 L765.7,245.4" stroke="#1a1a1a" stroke-width="0.85" />
<path d="M765.7,245.4 L765.7,240.9 L768.6,242.0 Z" fill="#1a1a1a"/>
<text x="791.5" y="219.8" font-size="6.1" text-anchor="middle" font-weight="bold" font-style="normal" fill="#1a1a1a" >26</text>
<path d="M785.9,218.0 L782.1,249.2" stroke="#1a1a1a" stroke-width="0.85" />
<path d="M782.1,249.2 L781.1,244.8 L784.1,245.2 Z" fill="#1a1a1a"/>
<text x="800.0" y="219.8" font-size="6.1" text-anchor="middle" font-weight="bold" font-style="normal" fill="#1a1a1a" >34</text>
<path d="M807.3,218.0 L811.0,245.4" stroke="#1a1a1a" stroke-width="0.85" />
<path d="M811.0,245.4 L809.0,241.4 L811.9,241.0 Z" fill="#1a1a1a"/>
<text x="824.0" y="219.8" font-size="6.1" text-anchor="middle" font-weight="bold" font-style="normal" fill="#1a1a1a" >33</text>
<path d="M819.9,218.0 L816.1,245.4" stroke="#1a1a1a" stroke-width="0.85" />
<path d="M816.1,245.4 L815.2,241.0 L818.2,241.4 Z" fill="#1a1a1a"/>
<text x="836.5" y="219.8" font-size="6.1" text-anchor="middle" font-weight="bold" font-style="normal" fill="#1a1a1a" >35</text>
<path d="M832.5,218.0 L826.2,240.4" stroke="#1a1a1a" stroke-width="0.85" />
<path d="M826.2,240.4 L825.9,236.0 L828.8,236.8 Z" fill="#1a1a1a"/>
<text x="848.0" y="219.8" font-size="6.1" text-anchor="middle" font-weight="bold" font-style="normal" fill="#1a1a1a" >31</text>
<path d="M845.1,218.0 L826.2,256.8" stroke="#1a1a1a" stroke-width="0.85" />
<path d="M826.2,256.8 L826.7,252.4 L829.4,253.7 Z" fill="#1a1a1a"/>
<text x="858.0" y="219.8" font-size="6.1" text-anchor="middle" font-weight="bold" font-style="normal" fill="#1a1a1a" >41</text>
<path d="M853.9,218.0 L843.9,245.4" stroke="#1a1a1a" stroke-width="0.85" />
<path d="M843.9,245.4 L843.9,240.9 L846.7,242.0 Z" fill="#1a1a1a"/>
<text x="870.5" y="219.8" font-size="6.1" text-anchor="middle" font-weight="bold" font-style="normal" fill="#1a1a1a" >36</text>
<path d="M866.5,218.0 L847.6,248.0" stroke="#1a1a1a" stroke-width="0.85" />
<path d="M847.6,248.0 L848.6,243.6 L851.1,245.2 Z" fill="#1a1a1a"/>
<text x="884.5" y="219.8" font-size="6.1" text-anchor="middle" font-weight="bold" font-style="normal" fill="#1a1a1a" >42</text>
<path d="M881.7,218.0 L859.0,251.7" stroke="#1a1a1a" stroke-width="0.85" />
<path d="M859.0,251.7 L860.1,247.4 L862.6,249.1 Z" fill="#1a1a1a"/>
<text x="681.0" y="348.6" font-size="6.1" text-anchor="middle" font-weight="bold" font-style="normal" fill="#1a1a1a" >2</text>
<path d="M686.3,343.0 L691.3,317.3" stroke="#1a1a1a" stroke-width="0.85" />
<path d="M691.3,317.3 L692.0,321.7 L689.0,321.1 Z" fill="#1a1a1a"/>
<text x="694.5" y="348.6" font-size="6.1" text-anchor="middle" font-weight="bold" font-style="normal" fill="#1a1a1a" >1</text>
<path d="M697.6,343.0 L700.2,309.7" stroke="#1a1a1a" stroke-width="0.85" />
<path d="M700.2,309.7 L701.4,314.0 L698.4,313.8 Z" fill="#1a1a1a"/>
<text x="739.5" y="348.6" font-size="6.1" text-anchor="middle" font-weight="bold" font-style="normal" fill="#1a1a1a" >10</text>
<path d="M734.2,343.0 L731.7,311.0" stroke="#1a1a1a" stroke-width="0.85" />
<path d="M731.7,311.0 L733.5,315.1 L730.5,315.3 Z" fill="#1a1a1a"/>
<text x="752.0" y="348.6" font-size="6.1" text-anchor="middle" font-weight="bold" font-style="normal" fill="#1a1a1a" >11</text>
<path d="M746.8,343.0 L745.5,314.7" stroke="#1a1a1a" stroke-width="0.85" />
<path d="M745.5,314.7 L747.2,318.8 L744.2,319.0 Z" fill="#1a1a1a"/>
<text x="778.5" y="348.6" font-size="6.1" text-anchor="middle" font-weight="bold" font-style="normal" fill="#1a1a1a" >20</text>
<path d="M773.3,342.5 L759.4,313.5" stroke="#1a1a1a" stroke-width="0.85" />
<path d="M759.4,313.5 L762.6,316.6 L759.9,317.9 Z" fill="#1a1a1a"/>
<text x="800.0" y="348.6" font-size="6.1" text-anchor="middle" font-weight="bold" font-style="normal" fill="#1a1a1a" >24</text>
<path d="M796.0,342.5 L785.9,309.7" stroke="#1a1a1a" stroke-width="0.85" />
<path d="M785.9,309.7 L788.6,313.3 L785.7,314.2 Z" fill="#1a1a1a"/>
<text x="825.0" y="348.6" font-size="6.1" text-anchor="middle" font-weight="bold" font-style="normal" fill="#1a1a1a" >30</text>
<path d="M819.9,342.5 L813.6,313.5" stroke="#1a1a1a" stroke-width="0.85" />
<path d="M813.6,313.5 L816.0,317.3 L813.0,317.9 Z" fill="#1a1a1a"/>
<text x="836.5" y="348.6" font-size="6.1" text-anchor="middle" font-weight="bold" font-style="normal" fill="#1a1a1a" >32</text>
<path d="M831.2,342.5 L824.9,314.7" stroke="#1a1a1a" stroke-width="0.85" />
<path d="M824.9,314.7 L827.3,318.5 L824.4,319.1 Z" fill="#1a1a1a"/>
<text x="855.5" y="348.6" font-size="6.1" text-anchor="middle" font-weight="bold" font-style="normal" fill="#1a1a1a" >37</text>
<path d="M848.9,342.5 L841.3,316.0" stroke="#1a1a1a" stroke-width="0.85" />
<path d="M841.3,316.0 L843.9,319.6 L841.0,320.5 Z" fill="#1a1a1a"/>
<text x="880.5" y="348.6" font-size="6.1" text-anchor="middle" font-weight="bold" font-style="normal" fill="#1a1a1a" >43</text>
<path d="M874.1,342.5 L866.5,309.7" stroke="#1a1a1a" stroke-width="0.85" />
<path d="M866.5,309.7 L868.9,313.5 L866.0,314.1 Z" fill="#1a1a1a"/>
<text x="894.5" y="348.6" font-size="6.1" text-anchor="middle" font-weight="bold" font-style="normal" fill="#1a1a1a" >44</text>
<path d="M891.7,342.5 L874.1,311.0" stroke="#1a1a1a" stroke-width="0.85" />
<path d="M874.1,311.0 L877.5,313.9 L874.8,315.4 Z" fill="#1a1a1a"/>
<path d="M628.6,392 H602 C599,392 597.5,393.5 597.5,396.5 V433 C597.5,436.5 599.5,438.2 603,438.2 H628.6" stroke="#1a1a1a" stroke-width="1.6" fill="none" />
<path d="M630.1,384.2 L630.1,443.4" stroke="#1a1a1a" stroke-width="1.8" />
<path d="M628.6,392.0 L628.6,438.2" stroke="#1a1a1a" stroke-width="0.8" />
<path d="M619.2,425.2 L628.6,425.2" stroke="#1a1a1a" stroke-width="0.7" />
<circle cx="604.2" cy="398.2" r="4.2" stroke="#1a1a1a" stroke-width="1.6" fill="none" />
<circle cx="604.2" cy="398.2" r="2.4" stroke="#1a1a1a" stroke-width="0.9" fill="none" />
<circle cx="604.2" cy="398.2" r="1.0" stroke="#1a1a1a" stroke-width="0.7" fill="none" />
<circle cx="621.3" cy="398.2" r="2.4" stroke="#1a1a1a" stroke-width="1.1" fill="none" />
<path d="M618.0,398.2 L624.6,398.2" stroke="#777" stroke-width="0.5" />
<circle cx="621.8" cy="432.0" r="4.2" stroke="#1a1a1a" stroke-width="1.6" fill="none" />
<circle cx="621.8" cy="432.0" r="2.4" stroke="#1a1a1a" stroke-width="0.9" fill="none" />
<circle cx="613" cy="414.8" r="11" stroke="#333" stroke-width="0.9" fill="none" stroke-dasharray="1.8,1.2"/>
<path d="M617,404.3 A11,11 0 0 1 619,424" stroke="#1a1a1a" stroke-width="1.6" fill="none" />
<path d="M601.5,414.8 L624.5,414.8" stroke="#777" stroke-width="0.5" />
<path d="M611.5,392 V404 M612.5,404 V425.7 M612.5,404 L618.2,423.7" stroke="#1a1a1a" stroke-width="0.8" fill="none" />
<text x="593.2" y="375.0" font-size="6.2" text-anchor="middle" font-weight="bold" font-style="normal" fill="#1a1a1a" >19</text>
<text x="624.3" y="375.0" font-size="6.2" text-anchor="middle" font-weight="bold" font-style="normal" fill="#1a1a1a" >17</text>
<text x="582.0" y="400.5" font-size="6.2" text-anchor="middle" font-weight="bold" font-style="normal" fill="#1a1a1a" >18</text>
<path d="M598.5,377.5 L601.1,391.5" stroke="#1a1a1a" stroke-width="0.9" />
<path d="M601.1,391.5 L598.9,387.6 L601.8,387.1 Z" fill="#1a1a1a"/>
<path d="M618.7,377.5 L615.6,400.3" stroke="#1a1a1a" stroke-width="0.9" />
<path d="M615.6,400.3 L614.7,395.9 L617.7,396.3 Z" fill="#1a1a1a"/>
<path d="M586.6,400.5 L595.9,414.8" stroke="#1a1a1a" stroke-width="0.9" />
<path d="M595.9,414.8 L592.4,412.1 L594.9,410.5 Z" fill="#1a1a1a"/>
<text x="615.4" y="454.5" font-size="5.8" text-anchor="middle" font-weight="normal" font-style="normal" fill="#111" stroke="#111" stroke-width="0.2">View A</text>
<path d="M678.2,388 C678.2,384 681,383 685,383 C695,383 700,374.7 713,374.7 C726,374.7 731,383 741,383 C745,383 747.1,384 747.1,388 V450 C747.1,454 745,455.5 742,456 C735,458 726,462.9 713,462.9 C700,462.9 691,458 684,456 C680,455.5 678.2,454 678.2,450 Z" stroke="#1a1a1a" stroke-width="1.3" fill="none" />
<path d="M680,452 V464 C680,465.8 681,466.6 683,466.6 H743 C745,466.6 746,465.8 746,464 V452" stroke="#1a1a1a" stroke-width="0.9" fill="none" />
<path d="M678.2,412.5 H671 C666,412.5 663.5,416 663.5,420 V440 C663.5,444 666,446.5 670,446.5 H678.2" stroke="#1a1a1a" stroke-width="0.9" fill="none" />
<path d="M747.1,412.5 H755 C760,412.5 763.2,416 763.2,420 V440 C763.2,444 760,446.5 756,446.5 H747.1" stroke="#1a1a1a" stroke-width="0.9" fill="none" />
<path d="M664,431 C668,431 672,433 672,436 C672,439 668,441 664,441" stroke="#1a1a1a" stroke-width="0.8" fill="none" />
<path d="M762.7,431 C758.7,431 754.7,433 754.7,436 C754.7,439 758.7,441 762.7,441" stroke="#1a1a1a" stroke-width="0.8" fill="none" />
<path d="M663.0,418.4 L764.0,418.4" stroke="#777" stroke-width="0.6" stroke-dasharray="6,1.5,1,1.5"/>
<path d="M663.0,431.8 L764.0,431.8" stroke="#777" stroke-width="0.6" stroke-dasharray="6,1.5,1,1.5"/>
<path d="M713.0,370.0 L713.0,470.0" stroke="#777" stroke-width="0.6" stroke-dasharray="6,1.5,1,1.5"/>
<rect x="676.7" y="407.3" width="5.2" height="23.0" rx="0" stroke="#1a1a1a" stroke-width="1.0" fill="none" />
<path d="M700,389 C712,383 730,385 739,392 C746,398 748,405 744,412 C741,418 741,422 744,428 C748,436 744,446 736,450 C726,455 705,455 695,448 C686,440 684,400 700,389 Z" stroke="#1a1a1a" stroke-width="1.1" fill="none" />
<path d="M701,392 C712,387 728,389 736,395 C742,400 744,406 740,412 C737,418 737,422 740,428 C744,435 741,444 734,447 C725,451 707,451 698,445 C690,438 689,403 701,392 Z" stroke="#1a1a1a" stroke-width="0.8" fill="none" />
<path d="M700,395 C704,389 722,389 726,395 C730,400 730,411 725,416 C723,418 723,420 725,422 C730,427 730,438 726,443 C722,449 704,449 700,443 C696,438 696,427 701,422 C703,420 703,418 701,416 C696,411 696,400 700,395 Z" stroke="#1a1a1a" stroke-width="1.5" fill="none" />
<rect x="692.2" y="409.5" width="9.7" height="17.8" rx="1.5" stroke="#1a1a1a" stroke-width="0.9" fill="none" />
<path d="M719.7,427.3 V408 C719.7,406.5 721,405.8 723,405.8 H738 C740,405.8 741.2,407 741.2,409 V425 C741.2,426.5 740,427.3 738,427.3 Z" stroke="#1a1a1a" stroke-width="0.9" fill="none" />
<circle cx="725.6" cy="418.4" r="3.5" stroke="#1a1a1a" stroke-width="0.9" fill="none" />
<path d="M707,418 C709,414 717,414 719,418 C717,422 709,422 707,418 Z" stroke="#1a1a1a" stroke-width="1.0" fill="none" />
<circle cx="687.8" cy="392.5" r="4.9" stroke="#1a1a1a" stroke-width="1.4" fill="url(#hat)" />
<circle cx="738.2" cy="392.5" r="4.9" stroke="#1a1a1a" stroke-width="1.4" fill="url(#hat)" />
<circle cx="687.8" cy="444.4" r="4.9" stroke="#1a1a1a" stroke-width="1.4" fill="url(#hat)" />
<circle cx="738.2" cy="444.4" r="4.9" stroke="#1a1a1a" stroke-width="1.4" fill="url(#hat)" />
<circle cx="713.0" cy="380.6" r="3.6" stroke="#1a1a1a" stroke-width="1.0" fill="none" />
<path d="M710.8,380.6 L715.2,380.6" stroke="#777" stroke-width="0.5" />
<path d="M713.0,378.4 L713.0,382.8" stroke="#777" stroke-width="0.5" />
<circle cx="713.0" cy="457.0" r="3.6" stroke="#1a1a1a" stroke-width="1.0" fill="none" />
<path d="M710.8,457.0 L715.2,457.0" stroke="#777" stroke-width="0.5" />
<path d="M713.0,454.8 L713.0,459.2" stroke="#777" stroke-width="0.5" />
<circle cx="686.3" cy="457.0" r="3.6" stroke="#1a1a1a" stroke-width="1.0" fill="none" />
<path d="M684.1,457.0 L688.5,457.0" stroke="#777" stroke-width="0.5" />
<path d="M686.3,454.8 L686.3,459.2" stroke="#777" stroke-width="0.5" />
<circle cx="739.0" cy="457.0" r="3.6" stroke="#1a1a1a" stroke-width="1.0" fill="none" />
<path d="M736.8,457.0 L741.2,457.0" stroke="#777" stroke-width="0.5" />
<path d="M739.0,454.8 L739.0,459.2" stroke="#777" stroke-width="0.5" />
<circle cx="713.0" cy="405.1" r="8.6" stroke="#1a1a1a" stroke-width="2.0" fill="#fff" />
<circle cx="713.0" cy="405.1" r="7.2" stroke="#1a1a1a" stroke-width="0.9" fill="url(#hat)" />
<circle cx="713.0" cy="431.0" r="8.6" stroke="#1a1a1a" stroke-width="2.0" fill="#fff" />
<circle cx="713.0" cy="431.0" r="7.2" stroke="#1a1a1a" stroke-width="0.9" fill="url(#hat)" />
<circle cx="721.2" cy="394.7" r="2.8" stroke="#1a1a1a" stroke-width="1.7" fill="none" />
<circle cx="721.2" cy="440.7" r="2.8" stroke="#1a1a1a" stroke-width="1.7" fill="none" />
<text x="668.3" y="374.6" font-size="6.2" text-anchor="middle" font-weight="bold" font-style="normal" fill="#1a1a1a" >45</text>
<path d="M672.0,376.5 L685.5,389.5" stroke="#1a1a1a" stroke-width="0.9" />
<path d="M685.5,389.5 L681.4,387.7 L683.5,385.5 Z" fill="#1a1a1a"/>
<text x="769.0" y="457.5" font-size="6.2" text-anchor="middle" font-weight="bold" font-style="normal" fill="#1a1a1a" >9</text>
<path d="M765.0,454.0 L735.0,437.0" stroke="#1a1a1a" stroke-width="0.9" />
<path d="M735.0,437.0 L739.4,437.8 L737.9,440.4 Z" fill="#1a1a1a"/>
<text x="667.3" y="470.5" font-size="6.2" text-anchor="middle" font-weight="bold" font-style="normal" fill="#1a1a1a" >7</text>
<path d="M671.0,467.5 L697.0,446.0" stroke="#1a1a1a" stroke-width="0.9" />
<path d="M697.0,446.0 L694.7,449.8 L692.8,447.5 Z" fill="#1a1a1a"/>
<text x="756.6" y="478.0" font-size="6.2" text-anchor="middle" font-weight="bold" font-style="normal" fill="#1a1a1a" >8</text>
<path d="M753.0,474.0 L723.0,443.0" stroke="#1a1a1a" stroke-width="0.9" />
<path d="M723.0,443.0 L727.0,445.0 L724.8,447.1 Z" fill="#1a1a1a"/>
<text x="713.9" y="483.5" font-size="5.8" text-anchor="middle" font-weight="normal" font-style="normal" fill="#111" stroke="#111" stroke-width="0.2">Section B</text>
<path d="M812.1,392 C812.1,389 815,388.4 818,388 C828,385 838,375.1 850.7,375.1 C862,375.1 870,382 877,385 C880.5,386.5 882.2,389 882.2,393 V448 C882.2,451 880,452.5 877,453 C868,456 862,464.7 850.7,464.7 C839,464.7 830,456 822,453 C816,451 812.1,449 812.1,446 Z" stroke="#1a1a1a" stroke-width="1.3" fill="none" />
<rect x="809.8" y="390.7" width="7.0" height="56.1" rx="0" stroke="#1a1a1a" stroke-width="1.2" fill="#fff" />
<rect x="800.5" y="396.9" width="9.3" height="8.6" rx="0" stroke="#1a1a1a" stroke-width="1.0" fill="none" />
<rect x="800.5" y="432.0" width="9.3" height="8.5" rx="0" stroke="#1a1a1a" stroke-width="1.0" fill="none" />
<path d="M798.0,401.2 L810.0,401.2" stroke="#777" stroke-width="0.6" />
<path d="M798.0,436.2 L810.0,436.2" stroke="#777" stroke-width="0.6" />
<rect x="886.1" y="395.4" width="3.9" height="45.9" rx="0" stroke="#1a1a1a" stroke-width="1.0" fill="none" />
<rect x="881.4" y="413.3" width="7.1" height="10.9" rx="0" stroke="#1a1a1a" stroke-width="1.0" fill="none" />
<path d="M796.0,418.5 L895.0,418.5" stroke="#777" stroke-width="0.6" stroke-dasharray="6,1.5,1,1.5"/>
<path d="M850.7,370.0 L850.7,470.0" stroke="#777" stroke-width="0.6" stroke-dasharray="6,1.5,1,1.5"/>
<path d="M840,406.3 H828 C823,406.3 820.7,410 820.7,418 C820.7,426 823,430.4 828,430.4 H840" stroke="#1a1a1a" stroke-width="1.0" fill="none" />
<path d="M865,410.2 H869 C871,410.2 872.1,412 872.1,418 C872.1,424 871,425.7 869,425.7 H865" stroke="#1a1a1a" stroke-width="0.9" fill="none" />
<path d="M838,394 C842,388 859,388 863,394 C867,399 867,410 862,415 C860,417 860,420 862,422 C867,427 867,438 863,443 C859,449 842,449 838,443 C834,438 834,427 839,422 C841,420 841,417 839,415 C834,410 834,399 838,394 Z" stroke="#1a1a1a" stroke-width="1.6" fill="none" />
<path d="M840.5,396.5 C844,391.5 857,391.5 860.5,396.5 C864,401 864,409 859.5,413.5 C857,416 857,421 859.5,423.5 C864,428 864,436 860.5,440.5 C857,445.5 844,445.5 840.5,440.5 C837,436 837,428 841.5,423.5 C844,421 844,416 841.5,413.5 C837,409 837,401 840.5,396.5 Z" stroke="#1a1a1a" stroke-width="0.8" fill="none" />
<circle cx="825.4" cy="393.0" r="4.0" stroke="#1a1a1a" stroke-width="1.2" fill="url(#hat)" />
<path d="M820.4,393.0 L830.4,393.0" stroke="#777" stroke-width="0.5" />
<path d="M825.4,388.0 L825.4,398.0" stroke="#777" stroke-width="0.5" />
<circle cx="874.4" cy="393.0" r="4.0" stroke="#1a1a1a" stroke-width="1.2" fill="url(#hat)" />
<path d="M869.4,393.0 L879.4,393.0" stroke="#777" stroke-width="0.5" />
<path d="M874.4,388.0 L874.4,398.0" stroke="#777" stroke-width="0.5" />
<circle cx="825.4" cy="444.4" r="4.0" stroke="#1a1a1a" stroke-width="1.2" fill="url(#hat)" />
<path d="M820.4,444.4 L830.4,444.4" stroke="#777" stroke-width="0.5" />
<path d="M825.4,439.4 L825.4,449.4" stroke="#777" stroke-width="0.5" />
<circle cx="874.4" cy="444.4" r="4.0" stroke="#1a1a1a" stroke-width="1.2" fill="url(#hat)" />
<path d="M869.4,444.4 L879.4,444.4" stroke="#777" stroke-width="0.5" />
<path d="M874.4,439.4 L874.4,449.4" stroke="#777" stroke-width="0.5" />
<circle cx="850.7" cy="379.8" r="4.0" stroke="#1a1a1a" stroke-width="1.2" fill="url(#hat)" />
<path d="M845.7,379.8 L855.7,379.8" stroke="#777" stroke-width="0.5" />
<path d="M850.7,374.8 L850.7,384.8" stroke="#777" stroke-width="0.5" />
<circle cx="850.7" cy="457.7" r="4.0" stroke="#1a1a1a" stroke-width="1.2" fill="url(#hat)" />
<path d="M845.7,457.7 L855.7,457.7" stroke="#777" stroke-width="0.5" />
<path d="M850.7,452.7 L850.7,462.7" stroke="#777" stroke-width="0.5" />
<circle cx="840.2" cy="379.8" r="2.0" stroke="#1a1a1a" stroke-width="1.0" fill="none" />
<circle cx="860.4" cy="458.5" r="2.0" stroke="#1a1a1a" stroke-width="1.0" fill="none" />
<circle cx="850.3" cy="404.7" r="8.8" stroke="#1a1a1a" stroke-width="2.0" fill="#fff" />
<circle cx="850.3" cy="404.7" r="7.4" stroke="#1a1a1a" stroke-width="0.9" fill="url(#hat)" />
<circle cx="850.3" cy="431.2" r="8.8" stroke="#1a1a1a" stroke-width="2.0" fill="#fff" />
<circle cx="850.3" cy="431.2" r="7.4" stroke="#1a1a1a" stroke-width="0.9" fill="url(#hat)" />
<circle cx="841.0" cy="396.2" r="2.6" stroke="#1a1a1a" stroke-width="1.6" fill="none" />
<circle cx="841.0" cy="440.5" r="2.6" stroke="#1a1a1a" stroke-width="1.6" fill="none" />
<rect x="847.5" y="415.5" width="6.0" height="6.0" rx="0" stroke="#1a1a1a" stroke-width="0.9" fill="none" />
<text x="812.9" y="377.3" font-size="6.2" text-anchor="middle" font-weight="bold" font-style="normal" fill="#1a1a1a" >39</text>
<path d="M816.8,375.9 L834.7,400.8" stroke="#1a1a1a" stroke-width="0.9" />
<path d="M834.7,400.8 L831.0,398.3 L833.5,396.5 Z" fill="#1a1a1a"/>
<text x="826.9" y="371.1" font-size="6.2" text-anchor="middle" font-weight="bold" font-style="normal" fill="#1a1a1a" >38</text>
<path d="M831.6,370.5 L839.4,393.0" stroke="#1a1a1a" stroke-width="0.9" />
<path d="M839.4,393.0 L836.6,389.5 L839.4,388.5 Z" fill="#1a1a1a"/>
<text x="868.2" y="370.3" font-size="6.2" text-anchor="middle" font-weight="bold" font-style="normal" fill="#1a1a1a" >40</text>
<path d="M862.8,369.7 L856.5,393.0" stroke="#1a1a1a" stroke-width="0.9" />
<path d="M856.5,393.0 L856.1,388.6 L859.0,389.3 Z" fill="#1a1a1a"/>
<text x="850.7" y="482.5" font-size="5.8" text-anchor="middle" font-weight="normal" font-style="normal" fill="#111" stroke="#111" stroke-width="0.2">Section C</text>
<text x="907.6" y="483.0" font-size="3.2" text-anchor="middle" font-weight="normal" font-style="normal" fill="#555" >W1M8-02-04-060</text>
<g font-size="5.6" fill="#111" stroke="#111" stroke-width="0.18">
<text x="567.4" y="498.0">1 -</text><text x="579.8" y="498.0">Coupling</text>
<text x="567.4" y="505.0">2 -</text><text x="579.8" y="505.0">O-Ring</text>
<text x="567.4" y="512.0">3 -</text><text x="579.8" y="512.0">Nut (4 Used)</text>
<text x="567.4" y="519.0">4 -</text><text x="579.8" y="519.0">Spring Washer (4 Used)</text>
<text x="567.4" y="526.0">5 -</text><text x="579.8" y="526.0">Stud Bolt (4 Used)</text>
<text x="567.4" y="533.0">6 -</text><text x="579.8" y="533.0">Cover</text>
<text x="567.4" y="540.0">7 -</text><text x="579.8" y="540.0">Backup Ring</text>
<text x="567.4" y="547.0">8 -</text><text x="579.8" y="547.0">Seal Plate</text>
<text x="567.4" y="554.0">9 -</text><text x="579.8" y="554.0">Isolation Plate</text>
<text x="567.4" y="561.0">10 -</text><text x="579.8" y="561.0">Pressure Plate</text>
<text x="567.4" y="568.0">11 -</text><text x="579.8" y="568.0">Drive Gear</text>
<text x="567.4" y="576.0">12 -</text><text x="579.8" y="576.0">Driven Gear</text>
<text x="656.5" y="497.3">13 -</text><text x="668.8" y="497.3">O-Ring</text>
<text x="656.5" y="504.4">14 -</text><text x="668.8" y="504.4">Knock Pin (2 Used)</text>
<text x="656.5" y="511.5">15 -</text><text x="668.8" y="511.5">Plate</text>
<text x="656.5" y="518.6">16 -</text><text x="668.8" y="518.6">Knock Pin (2 Used)</text>
<text x="656.5" y="525.7">17 -</text><text x="668.8" y="525.7">O-Ring</text>
<text x="656.5" y="532.8">18 -</text><text x="668.8" y="532.8">Cover</text>
<text x="656.5" y="539.8">19 -</text><text x="668.8" y="539.8">Socket Bolt (2 Used)</text>
<text x="656.5" y="546.9">20 -</text><text x="668.8" y="546.9">Pressure Plate</text>
<text x="656.5" y="554.0">21 -</text><text x="668.8" y="554.0">*Seal Plate</text>
<text x="656.5" y="561.1">22 -</text><text x="668.8" y="561.1">*Isolation Plate</text>
<text x="656.5" y="568.2">23 -</text><text x="668.8" y="568.2">*Backup Ring</text>
<text x="746" y="498.0">24 -</text><text x="757.6" y="498.0">Coupling</text>
<text x="746" y="505.0">25 -</text><text x="757.6" y="505.0">O-Ring</text>
<text x="746" y="512.0">26 -</text><text x="757.6" y="512.0">Center Plate</text>
<text x="746" y="519.0">27 -</text><text x="757.6" y="519.0">* Backup Ring</text>
<text x="746" y="526.0">28 -</text><text x="757.6" y="526.0">*Seal Plate</text>
<text x="746" y="533.0">29 -</text><text x="757.6" y="533.0">*Isolation Plate</text>
<text x="746" y="540.0">30 -</text><text x="757.6" y="540.0">Pressure Plate</text>
<text x="746" y="547.0">31 -</text><text x="757.6" y="547.0">Driven Gear</text>
<text x="746" y="554.0">32 -</text><text x="757.6" y="554.0">Drive Gear</text>
<text x="746" y="561.0">33 -</text><text x="757.6" y="561.0">O-Ring</text>
<text x="746" y="568.0">34 -</text><text x="757.6" y="568.0">Knock Pin (2 Used)</text>
<text x="835" y="498.0">35 -</text><text x="846" y="498.0">Plate</text>
<text x="835" y="505.0">36 -</text><text x="846" y="505.0">Knock Pin (2 Used)</text>
<text x="835" y="512.0">37 -</text><text x="846" y="512.0">Pressure Plate</text>
<text x="835" y="519.0">38 -</text><text x="846" y="519.0">Seal Plate</text>
<text x="835" y="526.0">39 -</text><text x="846" y="526.0">Isolation Plate</text>
<text x="835" y="533.0">40 -</text><text x="846" y="533.0">Backup Ring</text>
<text x="835" y="540.0">41 -</text><text x="846" y="540.0">O-Ring</text>
<text x="835" y="547.0">42 -</text><text x="846" y="547.0">Flange</text>
<text x="835" y="554.0">43 -</text><text x="846" y="554.0">Oil Seal</text>
<text x="835" y="561.0">44 -</text><text x="846" y="561.0">Snap Ring</text>
<text x="835" y="568.0">45 -</text><text x="846" y="568.0">Stabilizer (4 Used)</text>
</g>
<g transform="translate(560.6,585.2)" fill="none" stroke="#222" stroke-width="1.15" stroke-linejoin="round"><path d="M0.8,11 L1.8,7.8 L8.3,1.2 L10.6,3.5 L4.1,10 Z M1.8,7.8 L4.1,10 M7.2,2.3 L9.5,4.6 M5.5,4 L8,6.5"/><path d="M0.5,11.5 L2.5,9.5" stroke-width="1.2"/></g>
<g transform="translate(560.6,603.9)" fill="none" stroke="#222" stroke-width="1.15" stroke-linejoin="round"><path d="M0.8,11 L1.8,7.8 L8.3,1.2 L10.6,3.5 L4.1,10 Z M1.8,7.8 L4.1,10 M7.2,2.3 L9.5,4.6 M5.5,4 L8,6.5"/><path d="M0.5,11.5 L2.5,9.5" stroke-width="1.2"/></g>
<text x="572.2" y="594.8" font-size="6.6" font-style="italic" fill="#1a1a1a" stroke="#1a1a1a" stroke-width="0.12" textLength="21.1" lengthAdjust="spacingAndGlyphs">NOTE:</text>
<text x="597" y="594.8" font-size="6.6" font-style="italic" fill="#1a1a1a" stroke="#1a1a1a" stroke-width="0.12" textLength="8.4" lengthAdjust="spacingAndGlyphs">As</text>
<text x="610.7" y="594.8" font-size="6.6" font-style="italic" fill="#1a1a1a" stroke="#1a1a1a" stroke-width="0.12" textLength="7.8" lengthAdjust="spacingAndGlyphs">for</text>
<text x="623.2" y="594.8" font-size="6.6" font-style="italic" fill="#1a1a1a" stroke="#1a1a1a" stroke-width="0.12" textLength="10.3" lengthAdjust="spacingAndGlyphs">the</text>
<text x="638.7" y="594.8" font-size="6.6" font-style="italic" fill="#1a1a1a" stroke="#1a1a1a" stroke-width="0.12" textLength="14.3" lengthAdjust="spacingAndGlyphs">item</text>
<text x="658.7" y="594.8" font-size="6.6" font-style="italic" fill="#1a1a1a" stroke="#1a1a1a" stroke-width="0.12" textLength="12.1" lengthAdjust="spacingAndGlyphs">with</text>
<text x="676.4" y="594.8" font-size="6.6" font-style="italic" fill="#1a1a1a" stroke="#1a1a1a" stroke-width="0.12" textLength="15.9" lengthAdjust="spacingAndGlyphs">mark</text>
<text x="697" y="594.8" font-size="6.6" font-style="italic" fill="#1a1a1a" stroke="#1a1a1a" stroke-width="0.12" textLength="5.6" lengthAdjust="spacingAndGlyphs">*,</text>
<text x="707.3" y="594.8" font-size="6.6" font-style="italic" fill="#1a1a1a" stroke="#1a1a1a" stroke-width="0.12" textLength="15.5" lengthAdjust="spacingAndGlyphs">refer</text>
<text x="726.9" y="594.8" font-size="6.6" font-style="italic" fill="#1a1a1a" stroke="#1a1a1a" stroke-width="0.12" textLength="6.5" lengthAdjust="spacingAndGlyphs">to</text>
<text x="597" y="602.3" font-size="6.6" font-style="italic" fill="#1a1a1a" stroke="#1a1a1a" stroke-width="0.12" textLength="28.0" lengthAdjust="spacingAndGlyphs">W2-3-92.</text>
<text x="572.2" y="613.5" font-size="6.6" font-style="italic" fill="#1a1a1a" stroke="#1a1a1a" stroke-width="0.12" textLength="21.1" lengthAdjust="spacingAndGlyphs">NOTE:</text>
<text x="597" y="613.5" font-size="6.6" font-style="italic" fill="#1a1a1a" stroke="#1a1a1a" stroke-width="0.12" textLength="29.0" lengthAdjust="spacingAndGlyphs">Stabilizer</text>
<text x="628.4" y="613.5" font-size="6.6" font-style="italic" fill="#1a1a1a" stroke="#1a1a1a" stroke-width="0.12" textLength="11.9" lengthAdjust="spacingAndGlyphs">(46)</text>
<text x="643.1" y="613.5" font-size="6.6" font-style="italic" fill="#1a1a1a" stroke="#1a1a1a" stroke-width="0.12" textLength="5.1" lengthAdjust="spacingAndGlyphs">is</text>
<text x="650.4" y="613.5" font-size="6.6" font-style="italic" fill="#1a1a1a" stroke="#1a1a1a" stroke-width="0.12" textLength="27.2" lengthAdjust="spacingAndGlyphs">provided</text>
<text x="679.8" y="613.5" font-size="6.6" font-style="italic" fill="#1a1a1a" stroke="#1a1a1a" stroke-width="0.12" textLength="8.5" lengthAdjust="spacingAndGlyphs">for</text>
<text x="690.6" y="613.5" font-size="6.6" font-style="italic" fill="#1a1a1a" stroke="#1a1a1a" stroke-width="0.12" textLength="12.4" lengthAdjust="spacingAndGlyphs">only</text>
<text x="705.3" y="613.5" font-size="6.6" font-style="italic" fill="#1a1a1a" stroke="#1a1a1a" stroke-width="0.12" textLength="10.2" lengthAdjust="spacingAndGlyphs">the</text>
<text x="717.7" y="613.5" font-size="6.6" font-style="italic" fill="#1a1a1a" stroke="#1a1a1a" stroke-width="0.12" textLength="14.7" lengthAdjust="spacingAndGlyphs">plate</text>
<text x="597" y="621.2" font-size="6.6" font-style="italic" fill="#1a1a1a" stroke="#1a1a1a" stroke-width="0.12" textLength="12.0" lengthAdjust="spacingAndGlyphs">(36)</text>
<text x="611.5" y="621.2" font-size="6.6" font-style="italic" fill="#1a1a1a" stroke="#1a1a1a" stroke-width="0.12" textLength="14.5" lengthAdjust="spacingAndGlyphs">side.</text>
<path d="M561.0,637.4 L922.0,637.4" stroke="#1a1a1a" stroke-width="1.2" />
<text x="741.2" y="649.2" font-size="8.6" text-anchor="middle" font-weight="bold" font-style="normal" fill="#111" >W2-3-98</text>
</svg>
<!--/PAGESVG-->
</body></html>
